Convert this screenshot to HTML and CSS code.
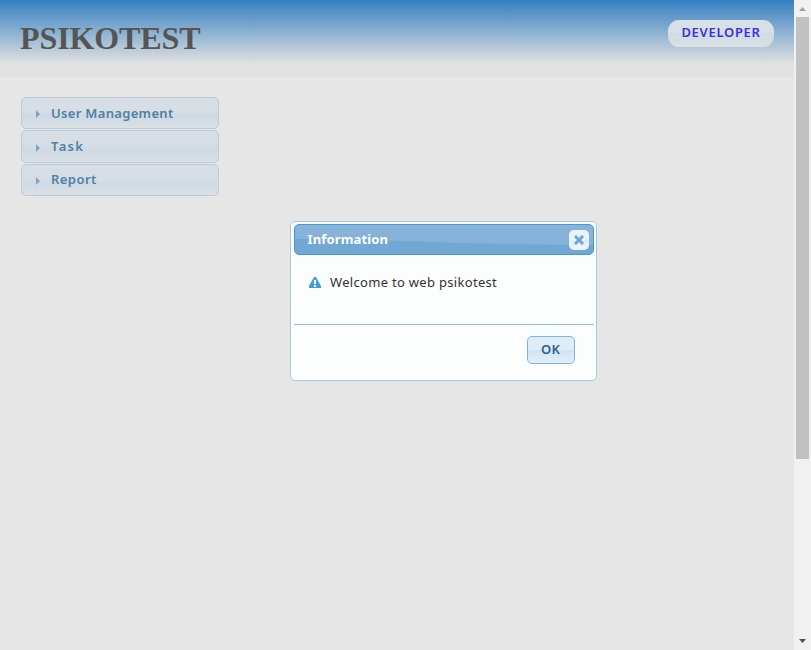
FILE: index.html
```html
<!DOCTYPE html>
<html lang="en">
<head>
<meta charset="utf-8">
<title>Psikotest</title>
<link rel="stylesheet" href="styles.css">
</head>
<body>
<div class="page">
  <header class="header">
    <h1 class="brand">PSIKOTEST</h1>
    <a class="account">DEVELOPER</a>
  </header>
  <nav class="menu">
    <a class="menu-item"><svg class="arrow" viewBox="0 0 4 8"><path d="M0 0L4 4L0 8Z"/></svg><span class="wide">User Management</span></a>
    <a class="menu-item tall"><svg class="arrow" viewBox="0 0 4 8"><path d="M0 0L4 4L0 8Z"/></svg><span class="short">Task</span></a>
    <a class="menu-item"><svg class="arrow" viewBox="0 0 4 8"><path d="M0 0L4 4L0 8Z"/></svg><span class="last">Report</span></a>
  </nav>
</div>
<div class="scrollbar">
  <svg class="scroll-up" viewBox="0 0 7 4"><path d="M0 4L3.5 0L7 4Z"/></svg>
  <div class="thumb"></div>
  <svg class="scroll-down" viewBox="0 0 7 4"><path d="M0 0L3.5 4L7 0Z"/></svg>
</div>
<section class="dialog" role="dialog">
  <div class="titlebar">
    <svg class="gloss" viewBox="0 0 298 29" preserveAspectRatio="none"><path d="M0 14Q70 14 140 17T298 20V29H0Z"/></svg>
    <span class="title">Information</span>
    <button class="close" aria-label="Close"><svg viewBox="0 0 10 10"><path d="M2 2L8 8M8 2L2 8"/></svg></button>
  </div>
  <div class="content">
    <svg class="alert" viewBox="0 0 12 11"><path class="alert-shape" d="M5 0H7L12 9V11H0V9Z"/><path class="alert-mark" d="M5 3H7V7H5ZM5 8H7V10H5Z"/></svg>
    <p class="message">Welcome to web psikotest</p>
  </div>
  <div class="buttons"><button class="ok">OK</button></div>
</section>
</body>
</html>
```
FILE: styles.css
```css
* { box-sizing: border-box; }
body {
  margin: 0;
  height: 650px;
  display: flex;
  overflow: hidden;
  background: #e6e6e6;
  font: 13px/18px "Noto Sans", "Open Sans", sans-serif;
}
.page { flex: 1; }
.header {
  height: 77px;
  padding: 20px 20px 0;
  display: flex;
  justify-content: space-between;
  align-items: flex-start;
  background: linear-gradient(#3580c2 0, #e1e1e1 64px);
}
.brand {
  margin: 0;
  font: bold 32px/37px "Liberation Serif", serif;
  letter-spacing: -.1px;
  color: #555;
}
.account {
  width: 106px;
  height: 27px;
  border-radius: 11px;
  background: linear-gradient(#d8dfe5 0 48%, #cfdbe4 50%, #dce0e3);
  color: #3c30e0;
  font-weight: 600;
  line-height: 24px;
  text-align: center;
  letter-spacing: .7px;
}
.menu {
  width: 198px;
  margin: 20px 0 0 21px;
  display: flex;
  flex-direction: column;
  gap: 1px;
}
.menu-item {
  height: 32px;
  padding: 0 14px;
  display: flex;
  align-items: center;
  border: 1px solid #b9cbd9;
  border-radius: 5px;
  background: linear-gradient(#d8dee5 0, #d6dde3 48%, #cedae4 58%, #dae0e5);
  color: #507fa8;
  font-weight: 600;
  letter-spacing: .6px;
}
.tall { height: 33px; }
.short, .last { margin-bottom: 2px; }
.wide { letter-spacing: .32px; }
.last { letter-spacing: .45px; }
.short { letter-spacing: 1.3px; }
.arrow {
  width: 4px;
  height: 8px;
  margin-right: 11px;
  position: relative;
  top: 1px;
  fill: #74a6cf;
}
.scrollbar {
  width: 17px;
  padding: 7px 2px 7px;
  display: flex;
  flex-direction: column;
  align-items: center;
  background: #f1f1f1;
}
.scroll-up { width: 7px; height: 4px; fill: #a3a3a3; }
.thumb { width: 13px; height: 442px; margin-top: 6px; background: #c1c1c1; }
.scroll-down { width: 7px; height: 4px; margin-top: auto; fill: #505050; }
.dialog {
  position: absolute;
  left: 290px;
  top: 221px;
  width: 307px;
  height: 160px;
  padding: 2px 2px 2px 3px;
  border: 1px solid #a6c9e2;
  border-radius: 5px;
  background: #fcfdfd;
  color: #333;
}
.titlebar {
  position: relative;
  width: 300px;
  height: 31px;
  padding: 0 4px 0 12.5px;
  display: flex;
  align-items: center;
  justify-content: space-between;
  border: 1px solid #4297d7;
  border-radius: 5px;
  background: linear-gradient(#8ab4da, #80b1d8);
  overflow: hidden;
}
.gloss { position: absolute; left: 0; top: 0; width: 298px; height: 29px; fill: #70a7d3; }
.title { position: relative; margin-bottom: 2px; color: #fff; font-weight: 700; letter-spacing: .15px; }
.close {
  position: relative;
  width: 20px;
  height: 20px;
  padding: 5px;
  border: 0;
  border-radius: 5px;
  background: linear-gradient(#eaf3fb 50%, #dfeefa 50%, #edf5fb);
}
.close svg { display: block; width: 10px; height: 10px; stroke: #6da8d5; stroke-width: 3; stroke-linecap: square; }
.content { height: 69px; padding: 18px 15px; display: flex; align-items: flex-start; }
.alert { width: 12px; height: 11px; margin: 4px 9px 0 0; }
.alert-shape { fill: #469bdd; }
.alert-mark { fill: #fff; }
.message { margin: 0; letter-spacing: .31px; }
.buttons {
  width: 300px;
  padding: 11px 19px 0 0;
  display: flex;
  justify-content: flex-end;
  border-top: 1px solid #8fbfe2;
}
.ok {
  width: 48px;
  height: 28px;
  padding: 0 1px 2px 0;
  border: 1px solid #77b5e6;
  border-radius: 5px;
  background: linear-gradient(#dfedf8 0 50%, #cfe3f4 50%, #e3eff8);
  color: #2e6090;
  font: 600 13px/18px "Noto Sans", "Open Sans", sans-serif;
  letter-spacing: .3px;
}
```
